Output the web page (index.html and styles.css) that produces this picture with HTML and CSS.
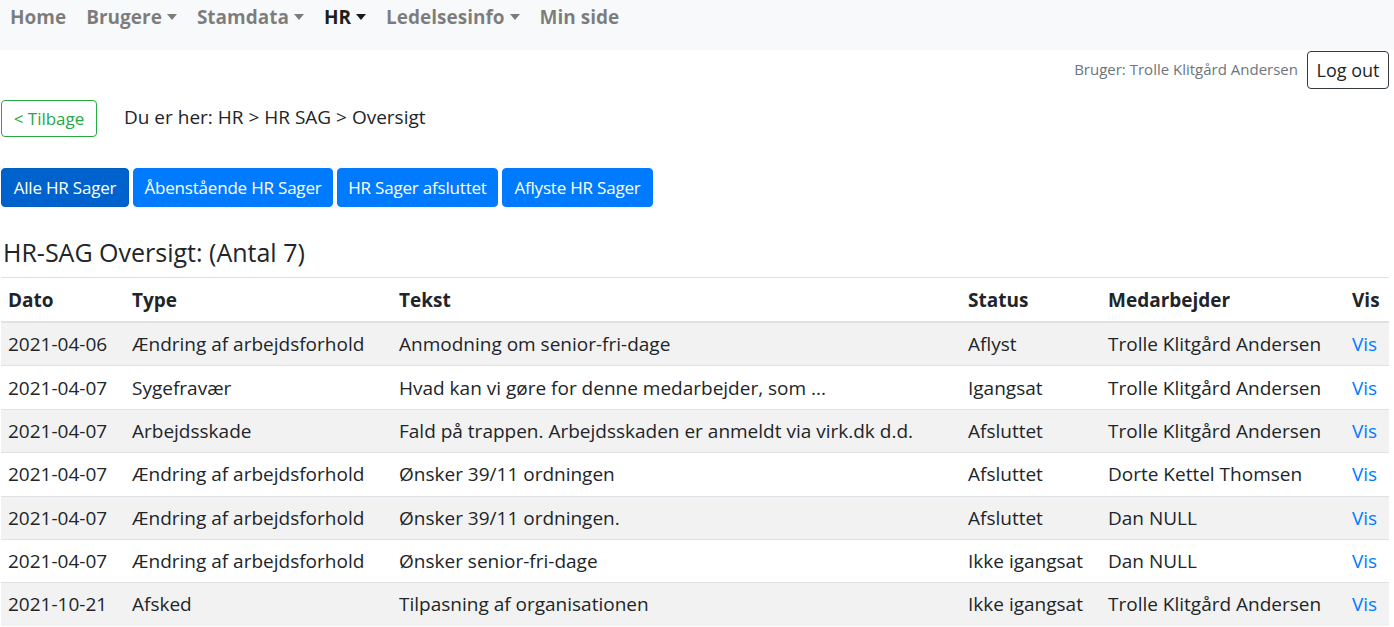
FILE: index.html
```html
<!DOCTYPE html>
<html lang="da">
<head>
<meta charset="utf-8">
<title>HR-SAG Oversigt</title>
<link rel="stylesheet" href="styles.css">
</head>
<body>
<nav class="navbar">
  <ul class="nav">
    <li><a class="nav-link" href="#">Home</a></li>
    <li><a class="nav-link dropdown" href="#">Brugere</a></li>
    <li><a class="nav-link dropdown" href="#">Stamdata</a></li>
    <li><a class="nav-link dropdown active" href="#">HR</a></li>
    <li><a class="nav-link dropdown" href="#">Ledelsesinfo</a></li>
    <li><a class="nav-link" href="#">Min side</a></li>
  </ul>
</nav>
<div class="page">
  <div class="userbar">
    <span class="user">Bruger: Trolle Klitgård Andersen</span>
    <button class="btn btn-logout">Log out</button>
  </div>
  <div class="crumbrow">
    <button class="btn btn-back">&lt; Tilbage</button>
    <span class="crumbs">Du er her: HR &gt; HR SAG &gt; Oversigt</span>
  </div>
  <div class="filters">
    <button class="btn btn-primary active">Alle HR Sager</button>
    <button class="btn btn-primary">Åbenstående HR Sager</button>
    <button class="btn btn-primary">HR Sager afsluttet</button>
    <button class="btn btn-primary">Aflyste HR Sager</button>
  </div>
  <h5 class="title">HR-SAG Oversigt: (Antal 7)</h5>
  <table class="table">
    <colgroup>
      <col class="c-dato"><col class="c-type"><col class="c-tekst"><col class="c-status"><col class="c-med"><col class="c-vis">
    </colgroup>
    <thead>
      <tr><th>Dato</th><th>Type</th><th>Tekst</th><th>Status</th><th>Medarbejder</th><th>Vis</th></tr>
    </thead>
    <tbody>
      <tr><td>2021-04-06</td><td>Ændring af arbejdsforhold</td><td>Anmodning om senior-fri-dage</td><td>Aflyst</td><td>Trolle Klitgård Andersen</td><td><a href="#">Vis</a></td></tr>
      <tr><td>2021-04-07</td><td>Sygefravær</td><td>Hvad kan vi gøre for denne medarbejder, som ...</td><td>Igangsat</td><td>Trolle Klitgård Andersen</td><td><a href="#">Vis</a></td></tr>
      <tr><td>2021-04-07</td><td>Arbejdsskade</td><td>Fald på trappen. Arbejdsskaden er anmeldt via virk.dk d.d.</td><td>Afsluttet</td><td>Trolle Klitgård Andersen</td><td><a href="#">Vis</a></td></tr>
      <tr><td>2021-04-07</td><td>Ændring af arbejdsforhold</td><td>Ønsker 39/11 ordningen</td><td>Afsluttet</td><td>Dorte Kettel Thomsen</td><td><a href="#">Vis</a></td></tr>
      <tr><td>2021-04-07</td><td>Ændring af arbejdsforhold</td><td>Ønsker 39/11 ordningen.</td><td>Afsluttet</td><td>Dan NULL</td><td><a href="#">Vis</a></td></tr>
      <tr><td>2021-04-07</td><td>Ændring af arbejdsforhold</td><td>Ønsker senior-fri-dage</td><td>Ikke igangsat</td><td>Dan NULL</td><td><a href="#">Vis</a></td></tr>
      <tr><td>2021-10-21</td><td>Afsked</td><td>Tilpasning af organisationen</td><td>Ikke igangsat</td><td>Trolle Klitgård Andersen</td><td><a href="#">Vis</a></td></tr>
    </tbody>
  </table>
</div>
</body>
</html>
```

FILE: styles.css
```css
* { box-sizing: border-box; }
html, body { margin: 0; padding: 0; background: #fff; }
body {
  font-family: "Open Sans", "Noto Sans", sans-serif;
  font-size: 19px;
  line-height: 30px;
  color: #212529;
}
a { color: #007bff; text-decoration: none; }

.navbar {
  background: #f8f9fa;
  height: 50px;
  padding: 2px 0 0 10px;
}
.nav {
  list-style: none;
  margin: 0;
  padding: 0;
  display: flex;
  gap: 20px;
}
.nav-link {
  display: block;
  font-weight: 700;
  font-size: 19px;
  line-height: 30px;
  color: rgba(0,0,0,.5);
}
.nav-link.active { color: rgba(0,0,0,.9); }
.dropdown::after {
  content: "";
  display: inline-block;
  margin-left: 5px;
  vertical-align: 4px;
  border-top: 6px solid;
  border-left: 5px solid transparent;
  border-right: 5px solid transparent;
}

.page { padding: 0 5px 0 1px; }

.btn {
  font-family: inherit;
  border: 1px solid transparent;
  border-radius: 4px;
  background: transparent;
  cursor: pointer;
  display: inline-flex;
  align-items: center;
  justify-content: center;
  white-space: nowrap;
  padding: 0;
}

.userbar {
  display: flex;
  justify-content: flex-end;
  align-items: flex-start;
  gap: 9px;
  padding-top: 1px;
}
.user {
  font-size: 15px;
  line-height: 20px;
  margin-top: 8px;
  color: #6c757d;
}
.btn-logout {
  height: 38px;
  width: 82px;
  font-size: 18px;
  color: #212529;
  border-color: #343a40;
}

.crumbrow {
  display: flex;
  align-items: center;
  gap: 27px;
  margin-top: 11px;
}
.btn-back {
  height: 37px;
  width: 96px;
  font-size: 17px;
  color: #28a745;
  border-color: #28a745;
}
.crumbs { font-size: 19px; line-height: 30px; margin-top: -4px; }

.filters {
  display: flex;
  gap: 4px;
  margin-top: 31px;
}
.btn-primary {
  height: 39px;
  font-size: 17px;
  letter-spacing: -0.2px;
  color: #fff;
  background: #007bff;
  border-color: #007bff;
}
.btn-primary.active { background: #0062cc; border-color: #005cbf; }
.filters .btn-primary:nth-child(1) { width: 128px; }
.filters .btn-primary:nth-child(2) { width: 200px; }
.filters .btn-primary:nth-child(3) { width: 161px; }
.filters .btn-primary:nth-child(4) { width: 151px; }

.title {
  margin: 30px 0 10px 2px;
  font-size: 25px;
  line-height: 30px;
  font-weight: 500;
}

.table {
  width: 100%;
  table-layout: fixed;
  border-collapse: collapse;
}
.c-dato { width: 124px; }
.c-type { width: 267px; }
.c-tekst { width: 569px; }
.c-status { width: 140px; }
.c-med { width: 244px; }
.c-vis { width: 44px; }
.table th, .table td {
  text-align: left;
  padding: 6px 6px 6px 7px;
  border-top: 1px solid #dee2e6;
  white-space: nowrap;
  overflow: hidden;
  vertical-align: top;
}
.table th { font-weight: 700; padding-top: 7px; padding-bottom: 6px; }
.table thead th { border-bottom: 2px solid #dee2e6; }
.table tbody tr:nth-child(odd) { background: rgba(0,0,0,.05); }
.table td { padding-top: 6.2px; padding-bottom: 6.2px; }
```
